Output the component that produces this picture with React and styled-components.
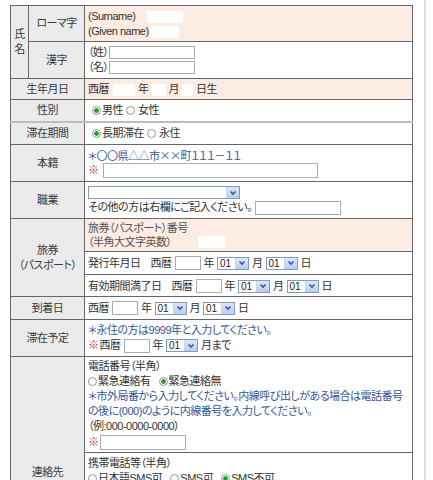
import React from "react";
import styled, { createGlobalStyle, css } from "styled-components";

const GlobalStyle = createGlobalStyle`
  body {
    margin: 0;
    background: #fff;
    font-family: "Liberation Sans", "Noto Sans CJK JP", sans-serif;
  }
`;

const Page = styled.div`
  width: 414px;
  min-height: 480px;
  padding: 5px 0 0 10px;
  border-right: 2px solid #dedede;
`;

const Form = styled.table`
  width: 403px;
  border-collapse: collapse;
  table-layout: fixed;
  font-size: 11px;
  line-height: 15px;
  letter-spacing: -0.5px;
  color: #333;
  font-feature-settings: "palt";
`;

const Head = styled.th`
  background: #ebebeb;
  border: 1px solid #666;
  font-weight: normal;
  text-align: center;
  vertical-align: middle;
  padding: 0;
  color: #3a3a3a;
  ${(p) => p.$soft && css`border-top: 2px solid #bdbdbd;`}
`;

const Cell = styled.td`
  background: ${(p) => (p.$tint ? "#fdece3" : "#fff")};
  border: 1px solid #666;
  padding: ${(p) => p.$pad || "3px"};
  vertical-align: ${(p) => p.$top ? "top" : "middle"};
  ${(p) => p.$soft && css`border-top: 2px solid #bdbdbd;`}
`;

const Line = styled.div`
  display: flex;
  align-items: center;
  height: ${(p) => p.$h || 15}px;
  white-space: nowrap;
  color: ${(p) => (p.$blue ? "#33579a" : p.$muted ? "#555" : "inherit")};
  ${(p) => p.$jp && css`font-family: "Noto Sans CJK JP", sans-serif;`}
`;

const Mark = styled.span`
  color: #c0392b;
  margin-right: 1px;
`;

const Field = styled.input`
  width: ${(p) => p.$w}px;
  height: ${(p) => p.$h || 14}px;
  box-sizing: border-box;
  border: 1px solid #a5acb2;
  background: #fff;
  padding: 0;
  margin: 0 ${(p) => p.$mr ?? 3}px 0 ${(p) => p.$ml ?? 3}px;
  font: inherit;
`;

const Ghost = styled.span`
  display: inline-block;
  width: ${(p) => p.$w}px;
  height: 12px;
  background: #fff;
  margin: 0 ${(p) => p.$mr ?? 3}px 0 ${(p) => p.$ml ?? 3}px;
`;

const Pick = styled.span`
  display: inline-flex;
  align-items: stretch;
  width: ${(p) => p.$w || 32}px;
  height: 13px;
  box-sizing: border-box;
  border: 1px solid #7f9db9;
  background: #fff;
  margin: 0 ${(p) => p.$m ?? 3}px;
  font: 10px/11px "Liberation Sans", sans-serif;
  letter-spacing: 0;
  color: #222;
`;

const PickText = styled.span`
  flex: 1;
  padding-left: 2px;
`;

const PickButton = styled.span`
  width: 12px;
  display: flex;
  align-items: center;
  justify-content: center;
  background: linear-gradient(#dbe6fb, #b9cdf2);
  border-left: 1px solid #c9d6ee;
`;

const Radio = styled.span`
  display: inline-block;
  flex: none;
  width: 9px;
  height: 9px;
  box-sizing: border-box;
  border: 1px solid #8c97a3;
  border-radius: 50%;
  margin: 0 1px 0 ${(p) => p.$ml ?? 4}px;
  background: ${(p) =>
    p.$on
      ? "radial-gradient(circle, #25a025 0, #25a025 2px, #fff 2.6px)"
      : "#fff"};
`;

const Label = styled.span`
  margin-left: ${(p) => p.$ml || 0}px;
`;

function Select({ w, value = "01", m }) {
  return (
    <Pick $w={w} $m={m}>
      <PickText>{value}</PickText>
      <PickButton>
        <svg width="8" height="6" viewBox="0 0 8 6">
          <polyline
            points="1.5,1.5 4,4 6.5,1.5"
            fill="none"
            stroke="#3f5a8a"
            strokeWidth="1.6"
          />
        </svg>
      </PickButton>
    </Pick>
  );
}

function DateLine({ prefix, gap = 10 }) {
  return (
    <Line $h={16}>
      {prefix && <Label>{prefix}</Label>}
      <Label $ml={prefix ? gap : 0}>西暦</Label>
      <Field $w={26} />
      年
      <Select />
      月
      <Select />
      日
    </Line>
  );
}

export default function App() {
  return (
    <>
      <GlobalStyle />
      <Page>
        <Form>
          <colgroup>
            <col style={{ width: 18 }} />
            <col style={{ width: 56 }} />
            <col />
          </colgroup>
          <tbody>
            <tr>
              <Head rowSpan={2}>
                氏<br />名
              </Head>
              <Head>ローマ字</Head>
              <Cell $tint $pad="3px 3px 2px">
                <Line>
                  (Surname)
                  <Ghost $w={36} $ml={12} />
                </Line>
                <Line>
                  (Given name)
                  <Ghost $w={29} $ml={1} />
                </Line>
              </Cell>
            </tr>
            <tr>
              <Head>漢字</Head>
              <Cell>
                <Line>
                  （姓）
                  <Field $w={86} $ml={0} $h={13} />
                </Line>
                <Line>
                  （名）
                  <Field $w={86} $ml={0} $h={13} />
                </Line>
              </Cell>
            </tr>
            <tr>
              <Head colSpan={2}>生年月日</Head>
              <Cell $tint $pad="3px 3px 2px">
                <Line>
                  西暦
                  <Ghost $w={22} $ml={4} />
                  年
                  <Ghost $w={14} />
                  月
                  <Ghost $w={11} />
                  日生
                </Line>
              </Cell>
            </tr>
            <tr>
              <Head colSpan={2}>性別</Head>
              <Cell>
                <Line>
                  <Radio $on />
                  男性
                  <Radio $ml={3} />
                  <Label $ml={2}>女性</Label>
                </Line>
              </Cell>
            </tr>
            <tr>
              <Head colSpan={2} $soft>
                滞在期間
              </Head>
              <Cell $soft>
                <Line>
                  <Radio $on />
                  長期滞在
                  <Radio $ml={3} />
                  <Label $ml={2}>永住</Label>
                </Line>
              </Cell>
            </tr>
            <tr>
              <Head colSpan={2}>本籍</Head>
              <Cell>
                <Line $blue $jp>
                  ＊〇〇県△△市××町１１１－１１
                </Line>
                <Line>
                  <Mark>※</Mark>
                  <Field $w={215} $h={15} />
                </Line>
              </Cell>
            </tr>
            <tr>
              <Head colSpan={2}>職業</Head>
              <Cell>
                <Line>
                  <Select w={152} value="" m={0} />
                </Line>
                <Line>
                  その他の方は右欄にご記入ください。
                  <Field $w={86} $h={14} />
                </Line>
              </Cell>
            </tr>
            <tr>
              <Head colSpan={2} rowSpan={3}>
                旅券
                <br />
                （パスポート）
              </Head>
              <Cell $tint $pad="2px 3px">
                <Line $muted $h={14}>
                  旅券（パスポート）番号
                </Line>
                <Line $muted $h={14}>
                  （半角大文字英数）
                  <Ghost $w={28} $ml={26} />
                </Line>
              </Cell>
            </tr>
            <tr>
              <Cell>
                <DateLine prefix="発行年月日" gap={10} />
              </Cell>
            </tr>
            <tr>
              <Cell $pad="3px 3px 2px">
                <DateLine prefix="有効期間満了日" gap={10} />
              </Cell>
            </tr>
            <tr>
              <Head colSpan={2}>到着日</Head>
              <Cell>
                <DateLine />
              </Cell>
            </tr>
            <tr>
              <Head colSpan={2}>滞在予定</Head>
              <Cell>
                <Line $blue>＊永住の方は9999年と入力してください。</Line>
                <Line>
                  <Mark>※</Mark>
                  西暦
                  <Field $w={26} />
                  年
                  <Select />
                  月まで
                </Line>
              </Cell>
            </tr>
            <tr>
              <Head colSpan={2} rowSpan={2}>
                連絡先
              </Head>
              <Cell $pad="2px 3px 2px">
                <Line>電話番号（半角）</Line>
                <Line>
                  <Radio $ml={0} />
                  緊急連絡有
                  <Radio $on $ml={8} />
                  緊急連絡無
                </Line>
                <Line $blue>
                  ＊市外局番から入力してください。内線呼び出しがある場合は電話番号
                </Line>
                <Line $blue>の後に(000)のように内線番号を入力してください。</Line>
                <Line>（例:000-0000-0000）</Line>
                <Line $h={16}>
                  <Mark>※</Mark>
                  <Field $w={86} $h={15} $ml={0} />
                </Line>
              </Cell>
            </tr>
            <tr>
              <Cell $top $pad="3px 3px 9px">
                <Line>携帯電話等（半角）</Line>
                <Line>
                  <Radio $ml={0} />
                  日本語SMS可
                  <Radio $ml={8} />
                  SMS可
                  <Radio $on $ml={8} />
                  SMS不可
                </Line>
                <Line $blue>＊SMS可の場合は携帯電話番号を入力してください。</Line>
                <Line $blue>＊お持ちでない方は空欄のままで結構です。</Line>
                <Line>（例:000-0000-0000）</Line>
                <Line $h={16}>
                  <Mark>※</Mark>
                  <Field $w={86} $h={15} $ml={0} />
                </Line>
                <Line>メールアドレス（半角）</Line>
                <Line $h={16}>
                  <Field $w={160} $h={15} $ml={0} />
                </Line>
              </Cell>
            </tr>
          </tbody>
        </Form>
      </Page>
    </>
  );
}
